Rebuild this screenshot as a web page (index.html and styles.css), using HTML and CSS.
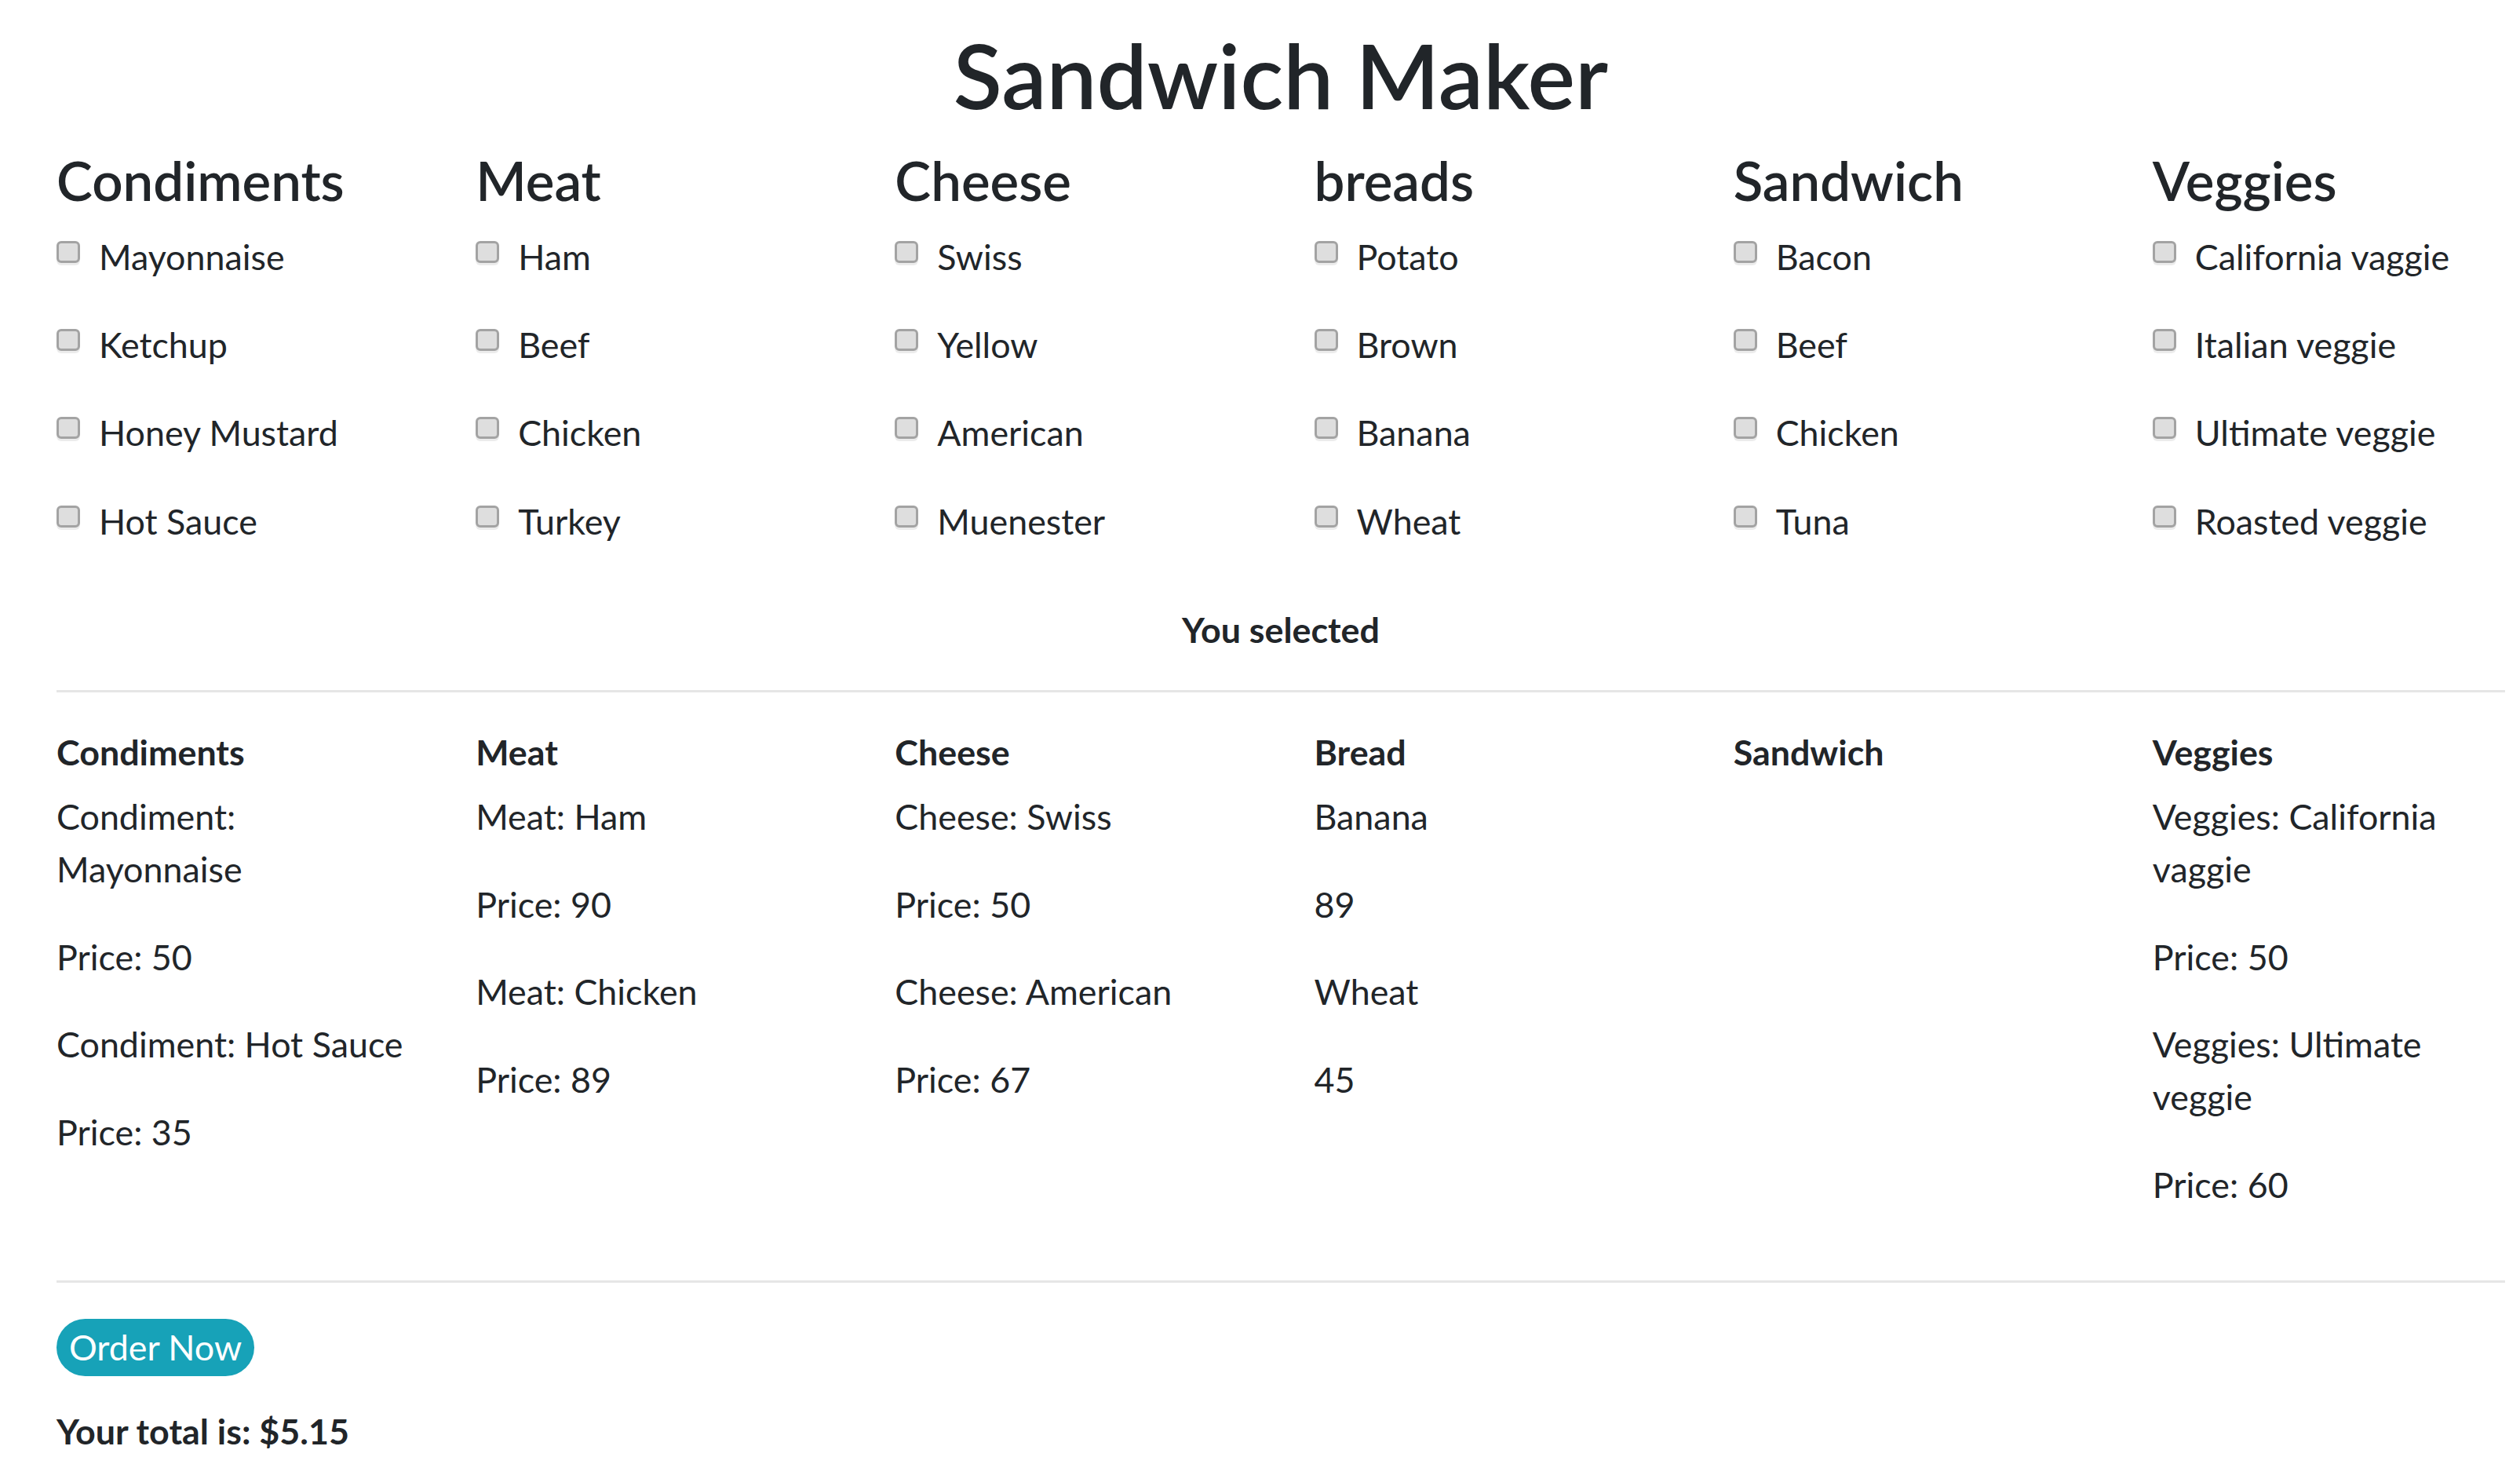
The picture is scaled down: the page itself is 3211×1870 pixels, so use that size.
FILE: index.html
```html
<!DOCTYPE html>
<html lang="en">
<head>
<meta charset="utf-8">
<title>Sandwich Maker</title>
<link rel="stylesheet" href="styles.css">
</head>
<body>
<div class="container">
  <h1 class="title">Sandwich Maker</h1>

  <div class="row">
    <div class="col">
      <h2 class="cat">Condiments</h2>
      <label class="check"><input type="checkbox"><span>Mayonnaise</span></label>
      <label class="check"><input type="checkbox"><span>Ketchup</span></label>
      <label class="check"><input type="checkbox"><span>Honey Mustard</span></label>
      <label class="check"><input type="checkbox"><span>Hot Sauce</span></label>
    </div>
    <div class="col">
      <h2 class="cat">Meat</h2>
      <label class="check"><input type="checkbox"><span>Ham</span></label>
      <label class="check"><input type="checkbox"><span>Beef</span></label>
      <label class="check"><input type="checkbox"><span>Chicken</span></label>
      <label class="check"><input type="checkbox"><span>Turkey</span></label>
    </div>
    <div class="col">
      <h2 class="cat">Cheese</h2>
      <label class="check"><input type="checkbox"><span>Swiss</span></label>
      <label class="check"><input type="checkbox"><span>Yellow</span></label>
      <label class="check"><input type="checkbox"><span>American</span></label>
      <label class="check"><input type="checkbox"><span>Muenester</span></label>
    </div>
    <div class="col">
      <h2 class="cat">breads</h2>
      <label class="check"><input type="checkbox"><span>Potato</span></label>
      <label class="check"><input type="checkbox"><span>Brown</span></label>
      <label class="check"><input type="checkbox"><span>Banana</span></label>
      <label class="check"><input type="checkbox"><span>Wheat</span></label>
    </div>
    <div class="col">
      <h2 class="cat">Sandwich</h2>
      <label class="check"><input type="checkbox"><span>Bacon</span></label>
      <label class="check"><input type="checkbox"><span>Beef</span></label>
      <label class="check"><input type="checkbox"><span>Chicken</span></label>
      <label class="check"><input type="checkbox"><span>Tuna</span></label>
    </div>
    <div class="col">
      <h2 class="cat">Veggies</h2>
      <label class="check"><input type="checkbox"><span>California vaggie</span></label>
      <label class="check"><input type="checkbox"><span>Italian veggie</span></label>
      <label class="check"><input type="checkbox"><span>Ultimate veggie</span></label>
      <label class="check"><input type="checkbox"><span>Roasted veggie</span></label>
    </div>
  </div>

  <h3 class="selected">You selected</h3>
  <hr class="rule rule-top">

  <div class="row">
    <div class="col">
      <h4 class="sum-head">Condiments</h4>
      <p class="line">Condiment: Mayonnaise</p>
      <p class="line">Price: 50</p>
      <p class="line">Condiment: Hot Sauce</p>
      <p class="line">Price: 35</p>
    </div>
    <div class="col">
      <h4 class="sum-head">Meat</h4>
      <p class="line">Meat: Ham</p>
      <p class="line">Price: 90</p>
      <p class="line">Meat: Chicken</p>
      <p class="line">Price: 89</p>
    </div>
    <div class="col">
      <h4 class="sum-head">Cheese</h4>
      <p class="line">Cheese: Swiss</p>
      <p class="line">Price: 50</p>
      <p class="line">Cheese: American</p>
      <p class="line">Price: 67</p>
    </div>
    <div class="col">
      <h4 class="sum-head">Bread</h4>
      <p class="line">Banana</p>
      <p class="line">89</p>
      <p class="line">Wheat</p>
      <p class="line">45</p>
    </div>
    <div class="col">
      <h4 class="sum-head">Sandwich</h4>
    </div>
    <div class="col">
      <h4 class="sum-head">Veggies</h4>
      <p class="line">Veggies: California vaggie</p>
      <p class="line">Price: 50</p>
      <p class="line">Veggies: Ultimate veggie</p>
      <p class="line">Price: 60</p>
    </div>
  </div>

  <hr class="rule rule-bottom">
  <button class="order" type="button">Order Now</button>
  <h4 class="total">Your total is: $5.15</h4>
</div>
</body>
</html>
```

FILE: styles.css
```css
html, body {
  margin: 0;
  padding: 0;
  background: #ffffff;
}

body {
  font-family: "Lato", "Open Sans", "Liberation Sans", sans-serif;
  font-size: 44.8px;
  line-height: 1.5;
  color: #212529;
}

.container {
  padding: 28px 19px 40px 72px;
}

.title {
  margin: 0 0 28px;
  font-size: 114px;
  line-height: 134px;
  font-weight: 600;
  text-align: center;
}

.row {
  display: grid;
  grid-template-columns: repeat(6, 1fr);
  margin: 0 -42.5px;
}

.col {
  padding: 0 42.5px;
  min-width: 0;
}

.cat {
  margin: 0 0 24px;
  font-size: 69px;
  line-height: 80px;
  font-weight: 600;
}

.check {
  display: flex;
  align-items: flex-start;
  gap: 24px;
  line-height: 67px;
  margin-bottom: 45.2px;
}

.check input {
  appearance: none;
  -webkit-appearance: none;
  flex: none;
  width: 30px;
  height: 28px;
  margin: 13px 0 0;
  box-sizing: border-box;
  border: 3px solid #a3a3a3;
  border-radius: 6px;
  background: #dedede;
  box-shadow: 0 3px 0 #ececec;
}

.selected {
  margin: 32px 0 0;
  font-size: 44.8px;
  line-height: 54px;
  font-weight: 700;
  text-align: center;
}

.rule {
  border: 0;
  border-top: 3px solid #e6e6e6;
  height: 0;
}

.rule-top {
  margin: 50px 0 49px;
}

.rule-bottom {
  margin: 43px 0 46px;
}

.sum-head {
  margin: 0 0 22.4px;
  font-size: 44.8px;
  line-height: 54px;
  font-weight: 700;
}

.line {
  margin: 0 0 44.6px;
  line-height: 67px;
}

.order {
  display: block;
  width: 252px;
  height: 73px;
  padding: 0;
  margin: 0 0 43px;
  border: 0;
  border-radius: 37px;
  background: #17a2b8;
  color: #ffffff;
  font-family: inherit;
  font-size: 44.8px;
  line-height: 73px;
  text-align: center;
}

.total {
  margin: 0;
  font-size: 44.8px;
  line-height: 54px;
  font-weight: 700;
}
```
